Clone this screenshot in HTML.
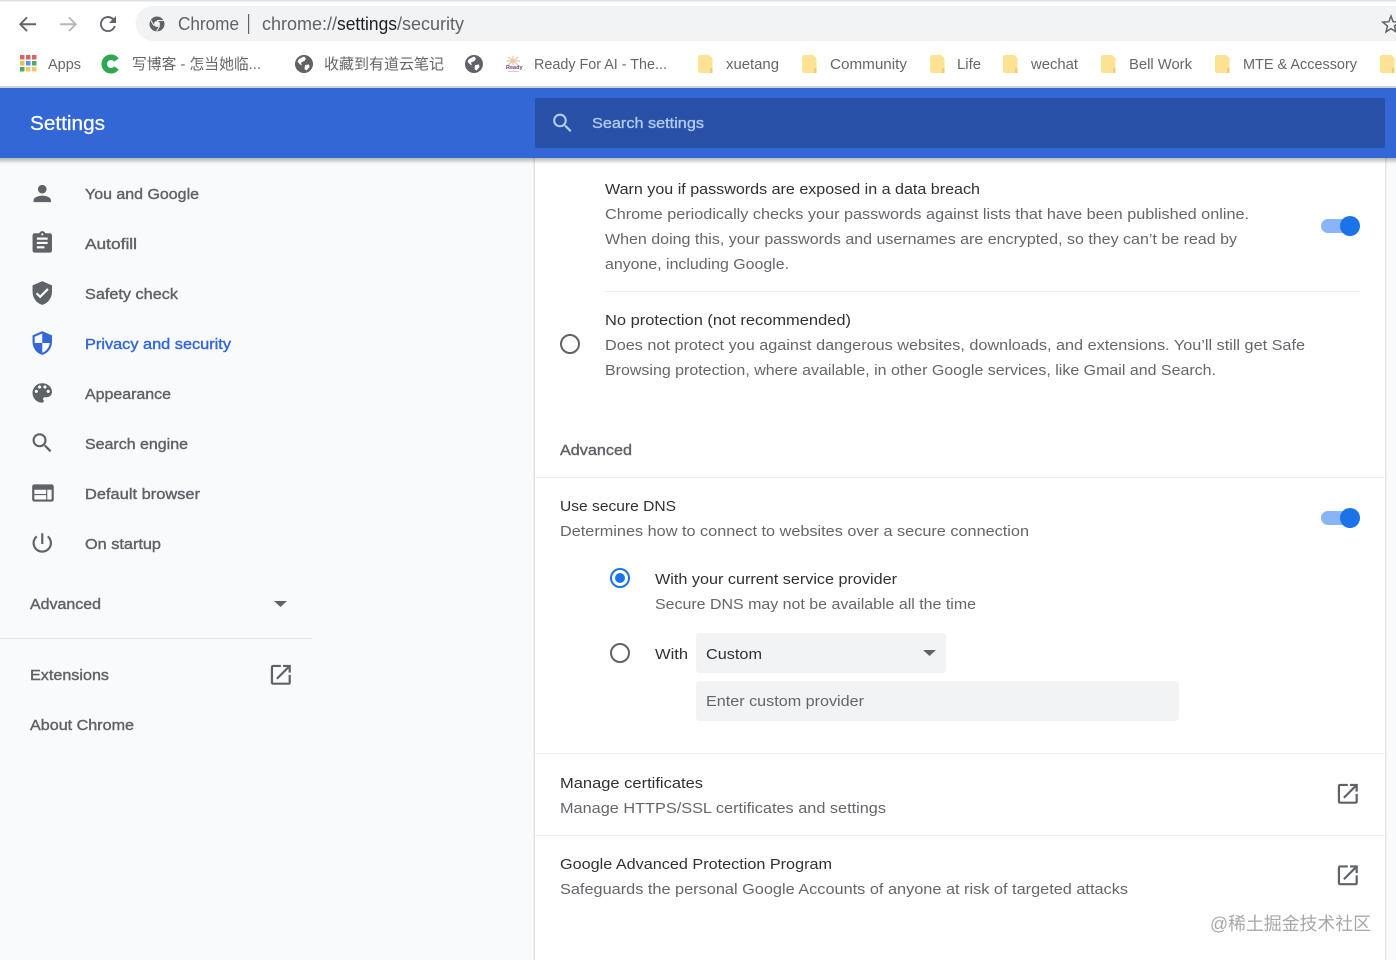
<!DOCTYPE html>
<html lang="en"><head><meta charset="utf-8"><title>Settings</title>
<style>
html,body{margin:0;padding:0;width:1396px;height:960px;overflow:hidden;background:#f8fafc}
svg{display:block;font-family:"Liberation Sans","Noto Sans CJK SC",sans-serif}
.t{font-size:15px;fill:#303134}
.s{font-size:15px;fill:#63676b}
.m{font-size:15px;fill:#5f6368;stroke:#5f6368;stroke-width:.4px}
.i{fill:#5f6368}
</style></head><body>
<svg width="1396" height="960" viewBox="0 0 1396 960" xmlns="http://www.w3.org/2000/svg">
<defs><linearGradient id="sh" x1="0" y1="0" x2="0" y2="1"><stop offset="0" stop-color="#000" stop-opacity=".28"/><stop offset="1" stop-color="#000" stop-opacity="0"/></linearGradient></defs>
<rect width="1396" height="960" fill="#f8fafc"/>
<rect x="535" y="158" width="850" height="802" fill="#fff"/>
<rect x="533.500" y="158" width="1.500" height="802" fill="#dfe1e5"/>
<rect x="1385" y="158" width="1.500" height="802" fill="#e3e5e9"/>
<rect width="1396" height="87" fill="#fff"/>
<rect width="1396" height="1.500" fill="#dee1e6"/>
<path d="M153 6H1396V41H153a17.500 17.500 0 0 1 0-35z" fill="#f1f3f4"/>
<path d="M36 23.200H22.500l5.200-5.200-1.300-1.300-7.500 7.500 7.500 7.500 1.300-1.300-5.200-5.200H36z" fill="#5f6368"/>
<path d="M60 23.200h13.500l-5.200-5.200 1.300-1.300 7.500 7.500-7.500 7.500-1.300-1.300 5.200-5.200H60z" fill="#b4b7bb"/>
<path d="M113.600 18.400A8 8 0 1 0 115.700 26h-2a6.100 6.100 0 1 1-1.500-6.200l-3.200 3.200h7v-7z" fill="#5f6368"/>
<circle cx="157" cy="24" r="7.500" fill="#5f6368"/><circle cx="157" cy="24" r="3" fill="#f1f3f4"/>
<path d="M157 20.500h6.500M154 25.800l-3.200-5.600M159.800 25.800l-3.200 5.600" stroke="#f1f3f4" stroke-width="1"/>
<text x="178" y="30" font-size="18" fill="#5f6368" textLength="61" lengthAdjust="spacingAndGlyphs">Chrome</text>
<rect x="248" y="14" width="1.200" height="20" fill="#5f6368"/>
<text x="262" y="30" font-size="18" fill="#5f6368" textLength="75" lengthAdjust="spacingAndGlyphs">chrome://</text>
<text x="337" y="30" font-size="18" fill="#202124" textLength="60" lengthAdjust="spacingAndGlyphs">settings</text>
<text x="397" y="30" font-size="18" fill="#5f6368" textLength="67" lengthAdjust="spacingAndGlyphs">/security</text>
<path d="M1391 16l2.100 5.700 6.100.4-4.700 3.900 1.500 5.900-5-3.300-5 3.300 1.500-5.900-4.700-3.900 6.100-.4z" fill="none" stroke="#5f6368" stroke-width="1.500"/>

<g>
<rect x="20" y="55" width="4.500" height="4.500" fill="#d8645f"/><rect x="26" y="55" width="4.500" height="4.500" fill="#d8645f"/><rect x="32" y="55" width="4.500" height="4.500" fill="#d8645f"/>
<rect x="20" y="61" width="4.500" height="4.500" fill="#eebd4f"/><rect x="26" y="61" width="4.500" height="4.500" fill="#5b93ee"/><rect x="32" y="61" width="4.500" height="4.500" fill="#4fa868"/>
<rect x="20" y="67" width="4.500" height="4.500" fill="#4fa868"/><rect x="26" y="67" width="4.500" height="4.500" fill="#f0ca62"/><rect x="32" y="67" width="4.500" height="4.500" fill="#f0ca62"/>
</g>
<text x="48" y="69" class="s" textLength="33" lengthAdjust="spacingAndGlyphs">Apps</text>
<path d="M116.500 60A6.800 6.800 0 1 0 116.500 68" fill="none" stroke="#2fa84f" stroke-width="5.500"/>
<text x="132" y="69" class="s" textLength="129" lengthAdjust="spacingAndGlyphs">写博客 - 怎当她临...</text>
<g fill="#5f6368"><circle cx="304" cy="64" r="9"/><circle cx="474" cy="64" r="9"/></g>
<g fill="#fff"><path d="M299 59l5-2.500 2 2-1.500 2.500-3.500 1.500 1 3-2.500-1.500-2-2.500zM305 65l4-.5.500 2.500-3 3.500-2-1.500z"/><path d="M469 59l5-2.500 2 2-1.500 2.500-3.500 1.500 1 3-2.500-1.500-2-2.500zM475 65l4-.5.500 2.500-3 3.500-2-1.500z"/></g>
<text x="324" y="69" class="s" textLength="120" lengthAdjust="spacingAndGlyphs">收藏到有道云笔记</text>
<g stroke="#ecc4a0" stroke-width="1.200" fill="none"><path d="M508 57l10 8M518 57l-10 8M513 56v9M507 61h13"/></g>
<text x="506" y="69" font-size="5.500" font-weight="bold" fill="#6a3d78">Ready</text>
<rect x="508" y="71" width="11" height="1" fill="#d9c3e0"/>
<text x="534" y="69" class="s" textLength="133" lengthAdjust="spacingAndGlyphs">Ready For AI - The...</text>
<g fill="#fde293">
<path d="M700 55h9l3.500 3v15H700a2 2 0 0 1-2-2V57a2 2 0 0 1 2-2z"/>
<path d="M804 55h9l3.500 3v15H804a2 2 0 0 1-2-2V57a2 2 0 0 1 2-2z"/>
<path d="M932 55h9l3.500 3v15H932a2 2 0 0 1-2-2V57a2 2 0 0 1 2-2z"/>
<path d="M1005 55h9l3.500 3v15H1005a2 2 0 0 1-2-2V57a2 2 0 0 1 2-2z"/>
<path d="M1103 55h9l3.500 3v15H1103a2 2 0 0 1-2-2V57a2 2 0 0 1 2-2z"/>
<path d="M1217 55h9l3.500 3v15H1217a2 2 0 0 1-2-2V57a2 2 0 0 1 2-2z"/>
<path d="M1382 55h9l3.500 3v15H1382a2 2 0 0 1-2-2V57a2 2 0 0 1 2-2z"/>
</g>
<g fill="#f0cd6e"><rect x="710" y="68" width="2.500" height="5"/><rect x="814" y="68" width="2.500" height="5"/><rect x="942" y="68" width="2.500" height="5"/><rect x="1015" y="68" width="2.500" height="5"/><rect x="1113" y="68" width="2.500" height="5"/><rect x="1227" y="68" width="2.500" height="5"/><rect x="1392" y="68" width="2.500" height="5"/></g>
<text x="726" y="69" class="s" textLength="53" lengthAdjust="spacingAndGlyphs">xuetang</text>
<text x="830" y="69" class="s" textLength="77" lengthAdjust="spacingAndGlyphs">Community</text>
<text x="957" y="69" class="s" textLength="24" lengthAdjust="spacingAndGlyphs">Life</text>
<text x="1031" y="69" class="s" textLength="47" lengthAdjust="spacingAndGlyphs">wechat</text>
<text x="1129" y="69" class="s" textLength="63" lengthAdjust="spacingAndGlyphs">Bell Work</text>
<text x="1243" y="69" class="s" textLength="114" lengthAdjust="spacingAndGlyphs">MTE &amp; Accessory</text>

<rect y="86" width="1396" height="2" fill="#cfd3dc"/>
<rect y="88" width="1396" height="70" fill="#3367d6"/>
<rect y="158" width="1396" height="6" fill="url(#sh)"/>
<text x="30" y="130" font-size="20" fill="#fff" stroke="#fff" stroke-width=".25" textLength="75" lengthAdjust="spacingAndGlyphs">Settings</text>
<rect x="535" y="98" width="850" height="50" rx="1" fill="#2a51a8"/>
<path transform="translate(550 110.500) scale(1.050)" d="M15.500 14h-.79l-.28-.27C15.410 12.590 16 11.110 16 9.500 16 5.910 13.090 3 9.500 3S3 5.910 3 9.500 5.910 16 9.500 16c1.610 0 3.090-.59 4.230-1.570l.27.28v.79l5 4.990L20.490 19l-4.990-5zm-6 0C7.010 14 5 11.990 5 9.500S7.010 5 9.500 5 14 7.010 14 9.500 11.990 14 9.500 14z" fill="#b3cdf5"/>
<text x="592" y="128" font-size="15" fill="#b0caf3" stroke="#b0caf3" stroke-width=".35" textLength="112" lengthAdjust="spacingAndGlyphs">Search settings</text>

<g class="i">
<path transform="translate(29.300 180.500) scale(1.080)" d="M12 12c2.210 0 4-1.790 4-4s-1.790-4-4-4-4 1.790-4 4 1.790 4 4 4zm0 2c-2.670 0-8 1.340-8 4v2h16v-2c0-2.660-5.330-4-8-4z"/>
<path transform="translate(29.300 230) scale(1.080)" d="M19 3h-4.180C14.400 1.840 13.300 1 12 1c-1.300 0-2.400.84-2.820 2H5c-1.100 0-2 .9-2 2v14c0 1.100.9 2 2 2h14c1.100 0 2-.9 2-2V5c0-1.100-.9-2-2-2zm-7 0c.55 0 1 .45 1 1s-.45 1-1 1-1-.45-1-1 .45-1 1-1zm2 14H7v-2h7v2zm3-4H7v-2h10v2zm0-4H7V7h10v2z"/>
<path transform="translate(29.300 280) scale(1.080)" d="M12 1L3 5v6c0 5.550 3.840 10.740 9 12 5.160-1.260 9-6.450 9-12V5l-9-4zm-2 16l-4-4 1.410-1.410L10 14.170l6.590-6.590L18 9l-8 8z"/>
<path transform="translate(29.300 330) scale(1.080)" fill="#3367d6" d="M12 1L3 5v6c0 5.550 3.840 10.740 9 12 5.160-1.260 9-6.450 9-12V5l-9-4zm0 10.990h7c-.53 4.120-3.280 7.790-7 8.940V12H5V6.300l7-3.110v8.800z"/>
<path transform="translate(29.300 380) scale(1.080)" d="M12 3c-4.970 0-9 4.030-9 9s4.030 9 9 9c.83 0 1.500-.67 1.500-1.500 0-.39-.15-.74-.39-1.010-.23-.26-.38-.61-.38-.99 0-.83.67-1.500 1.500-1.500H16c2.760 0 5-2.240 5-5 0-4.420-4.030-8-9-8zm-5.500 9c-.83 0-1.500-.67-1.500-1.500S5.670 9 6.500 9 8 9.670 8 10.500 7.330 12 6.500 12zm3-4C8.670 8 8 7.330 8 6.500S8.670 5 9.500 5s1.500.67 1.500 1.500S10.330 8 9.500 8zm5 0c-.83 0-1.500-.67-1.500-1.500S13.670 5 14.500 5s1.500.67 1.500 1.500S15.330 8 14.500 8zm3 4c-.83 0-1.500-.67-1.500-1.500S16.670 9 17.500 9s1.500.67 1.500 1.500-.67 1.500-1.500 1.500z"/>
<path transform="translate(29.300 430) scale(1.080)" d="M15.500 14h-.79l-.28-.27C15.410 12.590 16 11.110 16 9.500 16 5.910 13.090 3 9.500 3S3 5.910 3 9.500 5.910 16 9.500 16c1.610 0 3.090-.59 4.230-1.570l.27.28v.79l5 4.990L20.490 19l-4.990-5zm-6 0C7.010 14 5 11.990 5 9.500S7.010 5 9.500 5 14 7.010 14 9.500 11.990 14 9.500 14z"/>
<path transform="translate(30 480) scale(1.080)" d="M20 4H4c-1.100 0-1.990.9-1.990 2L2 18c0 1.100.9 2 2 2h16c1.100 0 2-.9 2-2V6c0-1.100-.9-2-2-2zm-5 14H4v-4h11v4zm0-5H4V9h11v4zm5 5h-4V9h4v9z"/>
<path transform="translate(29.300 530) scale(1.080)" d="M13 3h-2v10h2V3zm4.830 2.170l-1.420 1.420C17.990 7.860 19 9.810 19 12c0 3.870-3.130 7-7 7s-7-3.130-7-7c0-2.190 1.010-4.140 2.580-5.420L6.170 5.170C4.230 6.820 3 9.260 3 12c0 4.970 4.030 9 9 9s9-4.030 9-9c0-2.740-1.230-5.180-3.170-6.830z"/>
<path d="M274 601h13l-6.500 6z"/>
<path transform="translate(267.500 661.500) scale(1.110)" d="M19 19H5V5h7V3H5a2 2 0 0 0-2 2v14a2 2 0 0 0 2 2h14c1.100 0 2-.9 2-2v-7h-2v7zM14 3v2h3.590l-9.830 9.830 1.410 1.410L19 6.410V10h2V3h-7z"/>
<path transform="translate(1334.500 780.500) scale(1.110)" d="M19 19H5V5h7V3H5a2 2 0 0 0-2 2v14a2 2 0 0 0 2 2h14c1.100 0 2-.9 2-2v-7h-2v7zM14 3v2h3.590l-9.830 9.830 1.410 1.410L19 6.410V10h2V3h-7z"/>
<path transform="translate(1334.500 862) scale(1.110)" d="M19 19H5V5h7V3H5a2 2 0 0 0-2 2v14a2 2 0 0 0 2 2h14c1.100 0 2-.9 2-2v-7h-2v7zM14 3v2h3.590l-9.830 9.830 1.410 1.410L19 6.410V10h2V3h-7z"/>
</g>
<text x="85" y="199" class="m" textLength="114" lengthAdjust="spacingAndGlyphs">You and Google</text>
<text x="85" y="249" class="m" textLength="52" lengthAdjust="spacingAndGlyphs">Autofill</text>
<text x="85" y="299" class="m" textLength="93" lengthAdjust="spacingAndGlyphs">Safety check</text>
<text x="85" y="349" font-size="15" fill="#3367d6" stroke="#3367d6" stroke-width=".4" textLength="146" lengthAdjust="spacingAndGlyphs">Privacy and security</text>
<text x="85" y="399" class="m" textLength="86" lengthAdjust="spacingAndGlyphs">Appearance</text>
<text x="85" y="449" class="m" textLength="103" lengthAdjust="spacingAndGlyphs">Search engine</text>
<text x="85" y="499" class="m" textLength="115" lengthAdjust="spacingAndGlyphs">Default browser</text>
<text x="85" y="549" class="m" textLength="76" lengthAdjust="spacingAndGlyphs">On startup</text>
<text x="30" y="609" class="m" textLength="71" lengthAdjust="spacingAndGlyphs">Advanced</text>
<rect y="638" width="312" height="1" fill="#e2e5e8"/>
<text x="30" y="680" class="m" textLength="79" lengthAdjust="spacingAndGlyphs">Extensions</text>
<text x="30" y="730" class="m" textLength="104" lengthAdjust="spacingAndGlyphs">About Chrome</text>

<text x="605" y="194" class="t" textLength="375" lengthAdjust="spacingAndGlyphs">Warn you if passwords are exposed in a data breach</text>
<text x="605" y="219" class="s" textLength="644" lengthAdjust="spacingAndGlyphs">Chrome periodically checks your passwords against lists that have been published online.</text>
<text x="605" y="244" class="s" textLength="632" lengthAdjust="spacingAndGlyphs">When doing this, your passwords and usernames are encrypted, so they can’t be read by</text>
<text x="605" y="269" class="s" textLength="184" lengthAdjust="spacingAndGlyphs">anyone, including Google.</text>
<rect x="1321" y="219" width="30" height="14" rx="7" fill="#8ab4f8"/><circle cx="1350" cy="226" r="10" fill="#1a73e8"/>
<rect x="605" y="291" width="755" height="1" fill="#eeeff1"/>
<circle cx="570" cy="344" r="9" fill="none" stroke="#5f6368" stroke-width="2"/>
<text x="605" y="325" class="t" textLength="246" lengthAdjust="spacingAndGlyphs">No protection (not recommended)</text>
<text x="605" y="350" class="s" textLength="700" lengthAdjust="spacingAndGlyphs">Does not protect you against dangerous websites, downloads, and extensions. You’ll still get Safe</text>
<text x="605" y="375" class="s" textLength="611" lengthAdjust="spacingAndGlyphs">Browsing protection, where available, in other Google services, like Gmail and Search.</text>
<text x="560" y="455" class="m" textLength="72" lengthAdjust="spacingAndGlyphs">Advanced</text>
<rect x="535" y="477" width="850" height="1" fill="#eeeff1"/>
<text x="560" y="511" class="t" textLength="116" lengthAdjust="spacingAndGlyphs">Use secure DNS</text>
<text x="560" y="536" class="s" textLength="469" lengthAdjust="spacingAndGlyphs">Determines how to connect to websites over a secure connection</text>
<rect x="1321" y="511" width="30" height="14" rx="7" fill="#8ab4f8"/><circle cx="1350" cy="518" r="10" fill="#1a73e8"/>
<circle cx="620" cy="578" r="9" fill="none" stroke="#1a73e8" stroke-width="2"/><circle cx="620" cy="578" r="5" fill="#1a73e8"/>
<text x="655" y="584" class="t" textLength="242" lengthAdjust="spacingAndGlyphs">With your current service provider</text>
<text x="655" y="609" class="s" textLength="321" lengthAdjust="spacingAndGlyphs">Secure DNS may not be available all the time</text>
<circle cx="620" cy="653" r="9" fill="none" stroke="#5f6368" stroke-width="2"/>
<text x="655" y="659" class="t" textLength="33" lengthAdjust="spacingAndGlyphs">With</text>
<rect x="696" y="633" width="250" height="40" rx="4" fill="#f1f3f4"/>
<text x="706" y="659" class="t" textLength="56" lengthAdjust="spacingAndGlyphs">Custom</text>
<path d="M923 650h13l-6.500 6z" fill="#5f6368"/>
<rect x="696" y="681" width="483" height="40" rx="4" fill="#f1f3f4"/>
<text x="706" y="706" class="s" textLength="158" lengthAdjust="spacingAndGlyphs">Enter custom provider</text>
<rect x="535" y="753" width="850" height="1" fill="#eeeff1"/>
<text x="560" y="788" class="t" textLength="143" lengthAdjust="spacingAndGlyphs">Manage certificates</text>
<text x="560" y="813" class="s" textLength="326" lengthAdjust="spacingAndGlyphs">Manage HTTPS/SSL certificates and settings</text>
<rect x="535" y="835" width="850" height="1" fill="#eeeff1"/>
<text x="560" y="869" class="t" textLength="272" lengthAdjust="spacingAndGlyphs">Google Advanced Protection Program</text>
<text x="560" y="894" class="s" textLength="568" lengthAdjust="spacingAndGlyphs">Safeguards the personal Google Accounts of anyone at risk of targeted attacks</text>
<text x="1210" y="930" font-size="18" fill="#a8a8a8" textLength="161" lengthAdjust="spacingAndGlyphs">@稀土掘金技术社区</text>
</svg>
</body></html>
